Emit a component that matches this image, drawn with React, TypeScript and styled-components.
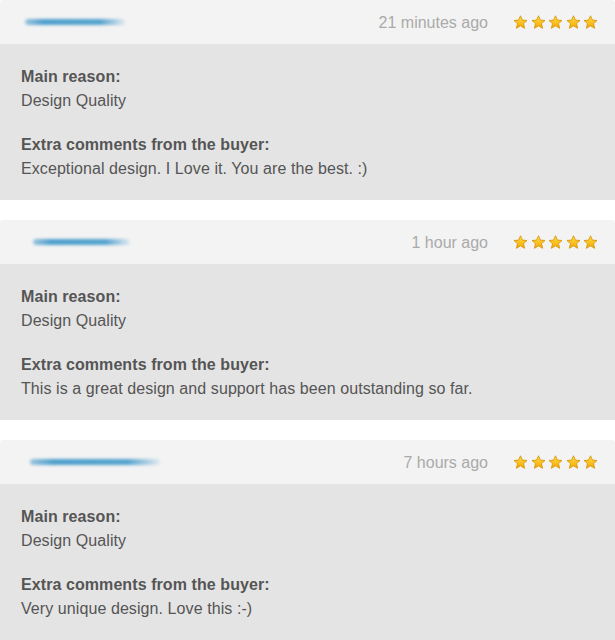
import React from 'react';
import styled, { createGlobalStyle } from 'styled-components';

const GlobalStyle = createGlobalStyle`
  body {
    margin: 0;
    background: #ffffff;
    font-family: "Liberation Sans", Arial, sans-serif;
  }
`;

const List = styled.div`
  display: flex;
  flex-direction: column;
  gap: 20px;
  width: 615px;
`;

const Card = styled.div`
  display: flex;
  flex-direction: column;
`;

const CardHeader = styled.div`
  height: 44px;
  background-color: #f3f3f3;
  border-radius: 3px 3px 0 0;
  display: flex;
  align-items: center;
  justify-content: space-between;
  padding: 0 17px 0 0;
`;

const NameSmudge = styled.div<{ $left: number; $width: number }>`
  margin-left: ${p => p.$left}px;
  width: ${p => p.$width}px;
  height: 6px;
  border-radius: 3px;
  background: linear-gradient(90deg, rgba(70,150,200,0.5) 0%, #4e9fcc 18%, #55a3ce 75%, rgba(120,180,215,0.15) 100%);
  filter: blur(1.8px);
`;

const Meta = styled.div`
  display: flex;
  align-items: center;
  gap: 25px;
`;

const TimeAgo = styled.span`
  font-size: 16px;
  color: #aaaaaa;
  margin-top: 1px;
`;

const Stars = styled.div`
  display: flex;
  gap: 2.5px;
  margin-top: 1px;
`;

const CardBody = styled.div`
  background-color: #e4e4e4;
  padding: 21px 21px 19px 21px;
  display: flex;
  flex-direction: column;
  gap: 20px;
  color: #555555;
  font-size: 16px;
  line-height: 24px;
  letter-spacing: 0.08px;
`;

const Field = styled.div`
  display: flex;
  flex-direction: column;
`;

const Label = styled.div`
  font-weight: bold;
`;

const Value = styled.div``;

const Star: React.FC = () => (
  <svg width="15" height="15" viewBox="0 0 15 15">
    <defs>
      <linearGradient id="sg" x1="0" y1="0" x2="0" y2="1">
        <stop offset="0%" stopColor="#ffe14a" />
        <stop offset="100%" stopColor="#f5a700" />
      </linearGradient>
    </defs>
    <path
      d="M7.5 0.8 L9.4 5.1 L14 5.5 L10.5 8.6 L11.6 13.3 L7.5 10.8 L3.4 13.3 L4.5 8.6 L1 5.5 L5.6 5.1 Z"
      fill="url(#sg)"
      stroke="#d9960a"
      strokeWidth="0.9"
      strokeLinejoin="round"
    />
  </svg>
);

const reviews = [
  {
    id: 1,
    time: '21 minutes ago',
    smudge: { left: 25, width: 100 },
    reason: 'Design Quality',
    comment: 'Exceptional design. I Love it. You are the best. :)',
  },
  {
    id: 2,
    time: '1 hour ago',
    smudge: { left: 33, width: 97 },
    reason: 'Design Quality',
    comment: 'This is a great design and support has been outstanding so far.',
  },
  {
    id: 3,
    time: '7 hours ago',
    smudge: { left: 30, width: 130 },
    reason: 'Design Quality',
    comment: 'Very unique design. Love this :-)',
  },
];

const App: React.FC = () => (
  <>
    <GlobalStyle />
    <List>
      {reviews.map(r => (
        <Card key={r.id}>
          <CardHeader>
            <NameSmudge $left={r.smudge.left} $width={r.smudge.width} />
            <Meta>
              <TimeAgo>{r.time}</TimeAgo>
              <Stars>
                {[0, 1, 2, 3, 4].map(i => (
                  <Star key={i} />
                ))}
              </Stars>
            </Meta>
          </CardHeader>
          <CardBody>
            <Field>
              <Label>Main reason:</Label>
              <Value>{r.reason}</Value>
            </Field>
            <Field>
              <Label>Extra comments from the buyer:</Label>
              <Value>{r.comment}</Value>
            </Field>
          </CardBody>
        </Card>
      ))}
    </List>
  </>
);

export default App;
